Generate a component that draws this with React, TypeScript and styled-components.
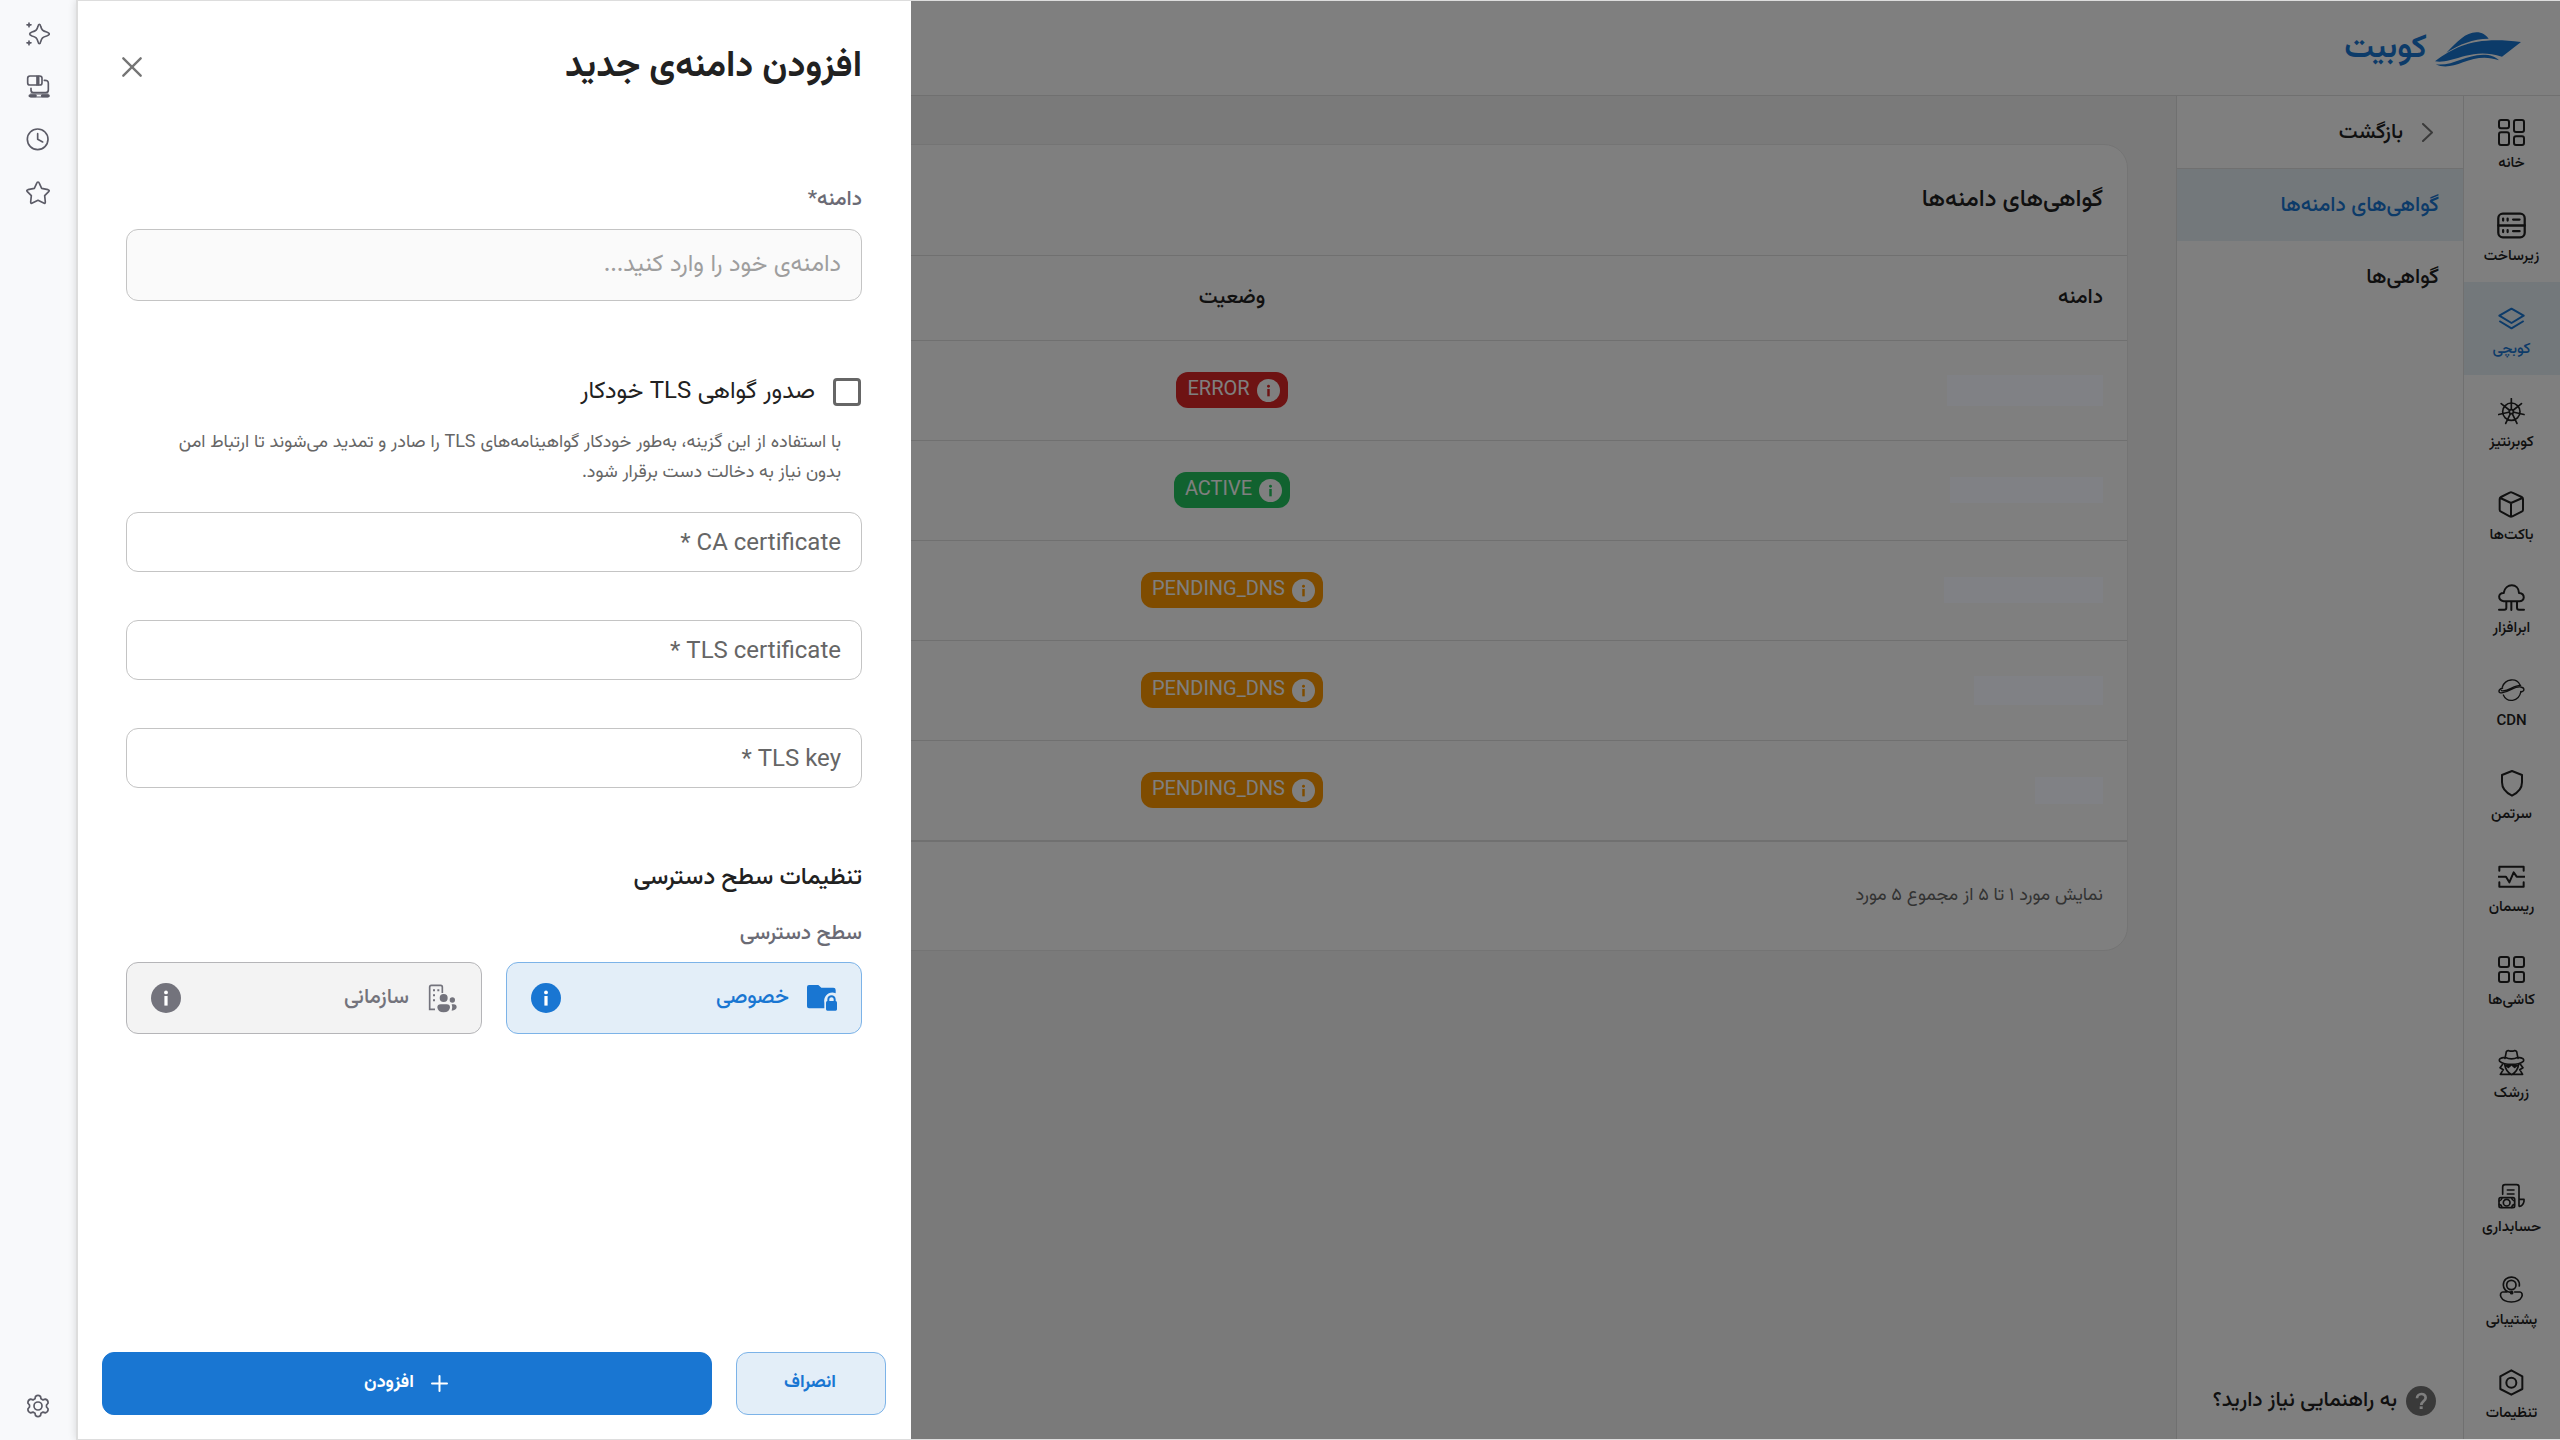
import React from "react";
import styled, { createGlobalStyle } from "styled-components";

const blue = "#1976d2";
const ink = "#212121";
const muted = "#666666";
const line = "#e0e0e0";
const paleBlue = "#e3eef8";
const activeFill = "#e7f0f7";
const font = `Vazirmatn, Roboto, "DejaVu Sans", sans-serif`;

const GlobalStyle = createGlobalStyle`
  *, *::before, *::after { box-sizing: border-box; }
  body { margin: 0; font-family: ${font}; color: ${ink}; background: #fff; }
  button, input { font-family: inherit; }
  button { cursor: pointer; }
  h1, h2, h3, p { margin: 0; }
  a { color: inherit; text-decoration: none; }
`;

/* ---------- shell ---------- */

const Shell = styled.div`
  display: grid;
  grid-template-columns: 76px minmax(0, 1fr);
  height: 100vh;
  background: #f8f9fb;
`;

const Rail = styled.aside`
  display: flex;
  flex-direction: column;
  align-items: center;
  gap: 29px;
  padding: 22px 0;
`;

const RailButton = styled.button<{ $last?: boolean }>`
  display: flex;
  padding: 0;
  border: 0;
  background: none;
  color: #5b5b66;
  margin-top: ${(p) => (p.$last ? "auto" : "0")};
`;

const Frame = styled.div`
  position: relative;
  display: flex;
  flex-direction: column;
  min-width: 0;
  overflow: hidden;
  direction: rtl;
  background: #fff;
  border: 1px solid #dddddd;
  border-left-width: 2px;
  border-right-width: 0;
  box-shadow: 0 0 8px rgba(0, 0, 0, 0.14);
`;

const Header = styled.header`
  display: flex;
  align-items: center;
  height: 95px;
  flex: none;
  padding: 2px 39px 0;
  border-bottom: 1px solid ${line};
`;

const Brand = styled.a`
  display: flex;
  align-items: center;
  gap: 8px;
  color: ${blue};
  font-size: 33px;
  line-height: 48px;
  font-weight: 600;
`;

const Body = styled.div`
  display: flex;
  flex: 1;
  min-height: 0;
`;

/* ---------- navigation ---------- */

const Nav = styled.nav`
  display: flex;
  flex-direction: column;
  flex: none;
  width: 97px;
  border-left: 1px solid ${line};
`;

const NavItem = styled.a<{ $active?: boolean; $push?: boolean }>`
  display: flex;
  flex-direction: column;
  align-items: center;
  height: 93px;
  padding: 23px 1px 0 0;
  gap: 6px;
  font-size: 15px;
  line-height: 24px;
  font-weight: 500;
  color: ${(p) => (p.$active ? blue : ink)};
  background: ${(p) => (p.$active ? activeFill : "transparent")};
  margin-top: ${(p) => (p.$push ? "auto" : "0")};
`;

const SubNav = styled.nav`
  display: flex;
  flex-direction: column;
  flex: none;
  width: 287px;
  border-left: 1px solid ${line};
`;

const BackLink = styled.a`
  display: flex;
  align-items: center;
  gap: 19px;
  height: 73px;
  padding: 1px 30px 0;
  border-bottom: 1px solid ${line};
  font-size: 21px;
  line-height: 32px;
  font-weight: 500;
`;

const SubItem = styled.a<{ $active?: boolean }>`
  display: flex;
  align-items: center;
  height: 72px;
  padding: 1px 24px 0;
  font-size: 21px;
  line-height: 32px;
  font-weight: 500;
  color: ${(p) => (p.$active ? blue : ink)};
  background: ${(p) => (p.$active ? activeFill : "transparent")};
`;

const HelpLink = styled.a`
  display: flex;
  align-items: center;
  gap: 9px;
  margin-top: auto;
  padding: 0 27px 22px;
  font-size: 21px;
  line-height: 32px;
  font-weight: 500;
`;

/* ---------- certificates table ---------- */

const Main = styled.main`
  flex: 1;
  min-width: 0;
  padding: 48px;
  background: #f5f5f5;
`;

const Card = styled.section`
  background: #fff;
  border: 1px solid #e8e8e8;
  border-radius: 24px;
`;

const CardTitle = styled.h1`
  padding: 35px 24px;
  border-bottom: 1px solid ${line};
  font-size: 24px;
  line-height: 40px;
  font-weight: 500;
`;

const Table = styled.table`
  width: 100%;
  table-layout: fixed;
  border-collapse: separate;
  border-spacing: 0;
  border-bottom: 1px solid ${line};
`;

const Cell = styled.td<{ $center?: boolean }>`
  height: 100px;
  padding: 0 24px 1px;
  border-bottom: 1px solid ${line};
  font-size: 0;
  line-height: 0;
  text-align: ${(p) => (p.$center ? "center" : "start")};
`;

const HeadCell = styled(Cell)`
  height: 85px;
  font-size: 21px;
  line-height: 32px;
  font-weight: 500;
`;

const HiddenDomain = styled.div<{ $w: number; $h: number }>`
  position: relative;
  z-index: 3;
  width: ${(p) => p.$w}px;
  height: ${(p) => p.$h}px;
  background: #808185;
`;

const Badge = styled.span<{ $tone: string }>`
  display: inline-flex;
  align-items: center;
  gap: 7px;
  height: 36px;
  padding: 0 8px 0 11px;
  border-radius: 12px;
  vertical-align: middle;
  background: ${(p) => p.$tone};
  color: #fff;
  font-family: Roboto, sans-serif;
  font-size: 20px;
  line-height: 24px;
`;

const BadgeText = styled.span`
  padding-bottom: 4px;
`;

const CardFooter = styled.p`
  padding: 36px 24px;
  font-size: 18px;
  line-height: 36px;
  color: ${muted};
`;

/* ---------- drawer ---------- */

const Backdrop = styled.div`
  position: absolute;
  inset: 0;
  z-index: 2;
  background: rgba(0, 0, 0, 0.5);
`;

const Drawer = styled.form`
  position: absolute;
  inset: 0 auto 0 0;
  z-index: 4;
  display: flex;
  flex-direction: column;
  width: 833px;
  background: #fff;
  border-right: 1px solid #ffffff;
`;

const DrawerHead = styled.div`
  display: flex;
  align-items: center;
  justify-content: space-between;
  height: 132px;
  flex: none;
  padding: 0 48px 0 44px;
`;

const DrawerTitle = styled.h2`
  font-size: 36px;
  line-height: 56px;
  font-weight: 700;
`;

const CloseButton = styled.button`
  display: flex;
  padding: 0;
  border: 0;
  background: none;
  color: #757575;
`;

const Fields = styled.div`
  display: flex;
  flex-direction: column;
  flex: 1;
  padding: 51px 48px 0;
`;

const FieldLabel = styled.label`
  font-size: 21px;
  line-height: 32px;
  font-weight: 500;
  color: #6b6b75;
`;

const TextField = styled.input<{ $tall?: boolean }>`
  width: 100%;
  height: ${(p) => (p.$tall ? "72px" : "60px")};
  padding: 0 20px;
  border: 1px solid #c4c4c4;
  border-radius: 12px;
  background: ${(p) => (p.$tall ? "#fafafa" : "#fff")};
  color: ${ink};
  font-family: ${(p) => (p.$tall ? font : `Roboto, ${font}`)};
  font-size: 24px;
  line-height: 32px;
  &::placeholder {
    color: ${(p) => (p.$tall ? "#9e9e9e" : muted)};
    opacity: 1;
  }
`;

const DomainGroup = styled.div`
  display: flex;
  flex-direction: column;
  gap: 13px;
`;

const CheckRow = styled.label`
  display: flex;
  align-items: center;
  gap: 18px;
  margin-top: 71px;
  padding: 0 1px;
  font-size: 24px;
  line-height: 40px;
`;

const Checkbox = styled.input`
  appearance: none;
  width: 28px;
  height: 28px;
  margin: 0;
  border: 3px solid ${muted};
  border-radius: 4px;
  background: #fff;
`;

const Hint = styled.p`
  margin: 16px 21px 0;
  font-size: 18px;
  line-height: 30px;
  color: ${muted};
`;

const CertStack = styled.div`
  display: flex;
  flex-direction: column;
  gap: 48px;
  margin-top: 24px;
`;

const Access = styled.fieldset`
  margin: 70px 0 0;
  padding: 0;
  border: 0;
`;

const AccessTitle = styled.h3`
  font-size: 24px;
  line-height: 40px;
  font-weight: 500;
`;

const AccessLabel = styled.p`
  margin: 20px 0 12px;
  font-size: 21px;
  line-height: 32px;
  font-weight: 500;
  color: #6b6b75;
`;

const Options = styled.div`
  display: grid;
  grid-template-columns: 1fr 1fr;
  gap: 24px;
`;

const Option = styled.button<{ $on?: boolean }>`
  display: flex;
  align-items: center;
  gap: 18px;
  height: 72px;
  padding: 0 24px;
  border: 1px solid ${(p) => (p.$on ? "#7cb3e8" : "#b5b5b8")};
  border-radius: 12px;
  background: ${(p) => (p.$on ? paleBlue : "#f3f3f3")};
  color: ${(p) => (p.$on ? blue : "#73737c")};
  font-size: 21px;
  line-height: 32px;
  font-weight: 500;
`;

const OptionText = styled.span`
  flex: 1;
  text-align: start;
`;

const Actions = styled.div`
  display: flex;
  gap: 24px;
  flex: none;
  padding: 24px;
`;

const ActionButton = styled.button<{ $primary?: boolean }>`
  display: flex;
  align-items: center;
  justify-content: center;
  gap: 17px;
  flex: ${(p) => (p.$primary ? "1" : "none")};
  width: ${(p) => (p.$primary ? "auto" : "150px")};
  height: 63px;
  padding: 0 8px 1px 6px;
  border: 1px solid ${(p) => (p.$primary ? blue : "#7cb3e8")};
  border-radius: 12px;
  background: ${(p) => (p.$primary ? blue : paleBlue)};
  color: ${(p) => (p.$primary ? "#fff" : blue)};
  font-size: 18px;
  line-height: 32px;
  font-weight: 700;
`;

/* ---------- drawings ---------- */

type IconProps = { w?: number; h?: number; box?: string; sw?: number; children: React.ReactNode };

const Icon = ({ w = 27, h = 27, box = "0 0 81 81", sw = 6, children }: IconProps) => (
  <svg width={w} height={h} viewBox={box} fill="none" stroke="currentColor" strokeWidth={sw}
    strokeLinecap="round" strokeLinejoin="round" aria-hidden="true">
    {children}
  </svg>
);

const InfoDot = ({ size, glyph = "#fff" }: { size: number; glyph?: string }) => (
  <Icon w={size} h={size} box="0 0 30 30" sw={0}>
    <circle cx="15" cy="15" r="15" fill="currentColor" />
    <rect x="13.4" y="13" width="3.2" height="9.6" fill={glyph} />
    <circle cx="15" cy="9.4" r="1.9" fill={glyph} />
  </Icon>
);

const Boat = () => (
  <svg width="86" height="35" viewBox="0 0 258 105" fill="currentColor" aria-hidden="true">
    <path d="M34 62C66 30 92 1 124 1c18 0 28 8 37 19C112 21 76 36 34 62z" />
    <path d="M0 88C62 40 128 12 258 30l-57 44C134 52 92 72 46 84 28 89 14 90 0 88z" />
    <path d="M2 97c50 6 88-28 142-29 22 0 38 6 48 17-38-14-72-8-108 6-30 12-58 18-82 6z" />
  </svg>
);

const HomeIcon = () => (
  <Icon>
    <rect x="3" y="3" width="30" height="25" rx="6" />
    <rect x="3" y="40" width="30" height="38" rx="6" />
    <rect x="48" y="3" width="30" height="36" rx="6" />
    <rect x="48" y="52" width="30" height="26" rx="6" />
  </Icon>
);

const ServerIcon = () => (
  <Icon w={29} h={27} box="0 0 90 81" sw={7}>
    <rect x="4" y="4" width="82" height="73" rx="14" />
    <path d="M4 40.500h82" />
    <path d="M19 19v6M33 19v6M50 22h20M19 55v6M33 55v6M50 58h20" />
  </Icon>
);

const LayersIcon = () => (
  <Icon>
    <path d="M40.500 11 77 32 40.500 54 4 32zM4 48l36.500 22L77 48" strokeLinecap="butt" />
  </Icon>
);

const HelmIcon = () => (
  <Icon sw={5}>
    <circle cx="40" cy="41" r="26" />
    <circle cx="40" cy="41" r="6" />
    {[0, 1, 2, 3, 4, 5, 6].map((i) => (
      <path key={i} d="M40 33V2" transform={`rotate(${(i * 360) / 7} 40 41)`} />
    ))}
  </Icon>
);

const CubeIcon = () => (
  <Icon>
    <path d="M35 5q4-2 8 0l28 13q4 2 4 6v32q0 4-4 6L43 76q-4 2-8 0L9 62q-4-2-4-6V24q0-4 4-6zM7 21l32 15 34-15M39 36v40" />
  </Icon>
);

const CloudLegsIcon = () => (
  <Icon>
    <path d="M17 52C-2 48 0 26 17 27 22-4 62-4 63 27c20 2 18 26 0 25zM25 54v17q0 6-6 6H3M40 54v24M57 54v17q0 6 6 6h15" />
  </Icon>
);

const PlanetIcon = () => (
  <Icon sw={4}>
    <path d="M13 30C22 4 56 2 66 24M16 54c11 24 46 22 53-11" />
    <path d="M14 33C-1 38-1 50 14 47c24-4 34-19 54-17 13 2 13 13 0 15M10 41c22 4 36-17 58-16" />
  </Icon>
);

const ShieldIcon = () => (
  <Icon>
    <path d="M42 3 72 15v22c0 19-11 31-30 40C23 68 12 56 12 37V15z" />
  </Icon>
);

const PulseIcon = () => (
  <Icon>
    <path d="M4 23V11h73v12M4 58v13h73V58M2 41h22l10 17 13-30 9 13h23" />
  </Icon>
);

const TilesIcon = () => (
  <Icon>
    {[3, 48].map((x) => [3, 48].map((y) => <rect key={`${x}-${y}`} x={x} y={y} width="30" height="30" rx="6" />))}
  </Icon>
);

const SpyIcon = () => (
  <Icon sw={5}>
    <path d="M21 28 25 8q2-4 7-3 9 3 17 0 5-1 7 3l4 20M21 25C6 26 2 31 5 37c16 12 55 12 71 0 3-6-1-11-16-12-12 6-27 6-39 0z" />
    <path d="M20 46c2 14 10 25 21 31 11-6 19-17 21-31M14 46 6 56l10 6-9 14h67l-9-14 10-6-8-10M24 49h14l-7 6zM43 49h14l-7 6z" />
  </Icon>
);

const BillingIcon = () => (
  <Icon sw={5}>
    <path d="M14 34V12q0-7 7-7h35q7 0 7 7v56M28 21h20M28 33h20M63 49h15v6q-3 14-14 15" />
    <rect x="3" y="44" width="47" height="30" rx="5" />
    <circle cx="26" cy="59" r="10" />
    <path d="M4 54q7-2 8-9M49 54q-7-2-8-9M4 64q7 2 8 9M49 64q-7 2-8 9" />
  </Icon>
);

const SupportIcon = () => (
  <Icon sw={5}>
    <circle cx="40" cy="27" r="14" />
    <path d="M64 30C68-4 16-6 16 27c0 10 8 20 24 23M27 48H14C2 49 4 77 40 78c36-1 38-29 26-30H50" />
    <circle cx="41" cy="50" r="3" fill="currentColor" />
  </Icon>
);

const HexIcon = () => (
  <Icon>
    <path d="M40 4 73 22v38L40 77 7 60V22z" />
    <circle cx="40" cy="41" r="15" />
  </Icon>
);

const QuestionDot = () => (
  <Icon w={30} h={30} box="0 0 90 90" sw={0}>
    <circle cx="45" cy="45" r="45" fill="#757575" />
    <path d="M33 37c0-17 26-17 26-2 0 11-13 11-13 22" stroke="#fff" strokeWidth="8" strokeLinecap="butt" />
    <rect x="41" y="61" width="9" height="8" fill="#fff" />
  </Icon>
);

const FolderLock = () => (
  <svg width="30" height="30" viewBox="0 0 90 90" fill="currentColor" aria-hidden="true">
    <path d="M6 6h28l9 8h36q7 0 7 7v10C68 23 48 38 52 60v16H6q-6 0-6-6V12q0-6 6-6z" />
    <path d="M57 59q0-5 4-5v-5c0-16 25-16 25 0v5q4 0 4 5v20q0 4-4 4H61q-4 0-4-4zM67 54h13v-5c0-8-13-8-13 0z" fillRule="evenodd" />
  </svg>
);

const OrgIcon = () => (
  <svg width="30" height="30" viewBox="0 0 90 90" fill="currentColor" aria-hidden="true">
    <path d="M24 79H8V12q0-5 5-5h28q5 0 5 5v18" fill="none" stroke="currentColor" strokeWidth="5" />
    <path d="M18 19h6v6h-6zM31 19h6v6h-6zM18 34h6v6h-6zM18 49h6v6h-6z" />
    <circle cx="50" cy="45" r="12" />
    <circle cx="76" cy="51" r="8" />
    <path d="M31 73q0-9 10-9h18q10 0 10 9-1 15-19 15T31 73zM74 64h6q9 0 9 9-1 9-15 10 4-10 0-19z" />
  </svg>
);

const navItems = [
  { text: "خانه", icon: <HomeIcon /> },
  { text: "زیرساخت", icon: <ServerIcon /> },
  { text: "کوبچی", icon: <LayersIcon />, active: true },
  { text: "کوبرنتیز", icon: <HelmIcon /> },
  { text: "باکت‌ها", icon: <CubeIcon /> },
  { text: "ابرافزار", icon: <CloudLegsIcon /> },
  { text: "CDN", icon: <PlanetIcon /> },
  { text: "سرتمن", icon: <ShieldIcon /> },
  { text: "ریسمان", icon: <PulseIcon /> },
  { text: "کاشی‌ها", icon: <TilesIcon /> },
  { text: "زرشک", icon: <SpyIcon /> },
  { text: "حسابداری", icon: <BillingIcon />, push: true },
  { text: "پشتیبانی", icon: <SupportIcon /> },
  { text: "تنظیمات", icon: <HexIcon /> },
];

const tones: Record<string, string> = { ERROR: "#dc2626", ACTIVE: "#22c55e", PENDING_DNS: "#ff9800" };

const rows = [
  { status: "ERROR", w: 156, h: 31 },
  { status: "ACTIVE", w: 153, h: 26 },
  { status: "PENDING_DNS", w: 159, h: 26 },
  { status: "PENDING_DNS", w: 129, h: 29 },
  { status: "PENDING_DNS", w: 68, h: 27 },
];

export default function App() {
  return (
    <Shell>
      <GlobalStyle />
      <Rail>
        <RailButton aria-label="Assistant">
          <Icon w={24} h={24} box="0 0 72 72" sw={5}>
            <path d="M40 7q3 0 4 6c3 11 6 14 18 17q8 3 8 6t-8 6c-12 3-15 6-18 17q-1 6-4 6t-4-6c-3-11-6-14-18-17q-7-3-7-6t7-6c12-3 15-6 18-17q1-6 4-6z" />
            <path d="M9 3v11M3 8.500h12M9 57v11M3 62.500h12" />
          </Icon>
        </RailButton>
        <RailButton aria-label="Players">
          <Icon w={24} h={24} box="0 0 72 72" sw={5}>
            <rect x="5" y="3" width="43" height="27" rx="7" />
            <path d="M33 4v25M38 4v25M55 16q12-1 12 9v20q0 8-8 8H22q-7 0-7-8v-5" />
            <path d="M12 62h16M49 62h18" strokeWidth="9" />
            <path d="M14 57h52M14 66h52" strokeWidth="3" />
          </Icon>
        </RailButton>
        <RailButton aria-label="History">
          <Icon w={24} h={24} box="0 0 72 72" sw={5}>
            <circle cx="35" cy="34" r="31" />
            <path d="M35 17v17l15 8" />
          </Icon>
        </RailButton>
        <RailButton aria-label="Bookmarks">
          <Icon w={24} h={24} box="0 0 72 72" sw={5}>
            <path d="M36 3q3 0 4 4l7 15 19 4q6 2 2 6L56 44l2 19q0 6-5 3L36 58l-17 8q-5 3-5-3l2-19L4 32q-4-4 2-6l19-4 7-15q1-4 4-4z" />
          </Icon>
        </RailButton>
        <RailButton $last aria-label="Settings">
          <Icon w={24} h={24} box="0 0 24 24" sw={1.700}>
            <path d="M9.500 2.500Q12 .2 14.500 2.500l.5 2.300 2 1.100 2.300-.8q3.200.9 2.700 4.200L20.500 11v2l1.500 1.700q.5 3.300-2.700 4.200l-2.300-.8-2 1.100-.5 2.300Q12 23.800 9.500 21.500L9 19.200l-2-1.100-2.300.8Q1.500 18 2 14.700L3.500 13v-2L2 9.300Q1.500 6 4.700 5.100l2.300.8 2-1.100z" />
            <circle cx="12" cy="12" r="4" />
          </Icon>
        </RailButton>
      </Rail>

      <Frame>
        <Header>
          <Brand href="#">
            <Boat />
            کوبیت
          </Brand>
        </Header>
        <Body>
          <Nav>
            {navItems.map((n) => (
              <NavItem key={n.text} href="#" $active={n.active} $push={n.push}>
                {n.icon}
                {n.text}
              </NavItem>
            ))}
          </Nav>
          <SubNav>
            <BackLink href="#">
              <Icon w={11} h={19} box="0 0 33 57">
                <path d="M3 3l27 25.500L3 54" stroke="#757575" />
              </Icon>
              بازگشت
            </BackLink>
            <SubItem href="#" $active>گواهی‌های دامنه‌ها</SubItem>
            <SubItem href="#">گواهی‌ها</SubItem>
            <HelpLink href="#">
              <QuestionDot />
              به راهنمایی نیاز دارید؟
            </HelpLink>
          </SubNav>
          <Main>
            <Card>
              <CardTitle>گواهی‌های دامنه‌ها</CardTitle>
              <Table>
                <colgroup>
                  <col width="30%" />
                  <col width="29.5%" />
                  <col />
                </colgroup>
                <thead>
                  <tr>
                    <HeadCell as="th" scope="col">دامنه</HeadCell>
                    <HeadCell as="th" scope="col" $center>وضعیت</HeadCell>
                    <HeadCell />
                  </tr>
                </thead>
                <tbody>
                  {rows.map((r, i) => (
                    <tr key={i}>
                      <Cell><HiddenDomain $w={r.w} $h={r.h} /></Cell>
                      <Cell $center>
                        <Badge $tone={tones[r.status]}>
                          <InfoDot size={23} glyph={tones[r.status]} />
                          <BadgeText>{r.status}</BadgeText>
                        </Badge>
                      </Cell>
                      <Cell />
                    </tr>
                  ))}
                </tbody>
              </Table>
              <CardFooter>نمایش مورد ۱ تا ۵ از مجموع ۵ مورد</CardFooter>
            </Card>
          </Main>
        </Body>

        <Backdrop />

        <Drawer onSubmit={(e) => e.preventDefault()}>
          <DrawerHead>
            <DrawerTitle>افزودن دامنه‌ی جدید</DrawerTitle>
            <CloseButton type="button" aria-label="بستن">
              <Icon w={20} h={20} box="0 0 60 60" sw={7}>
                <path d="M4 4l52 52M56 4 4 56" />
              </Icon>
            </CloseButton>
          </DrawerHead>
          <Fields>
            <DomainGroup>
              <FieldLabel htmlFor="domain">دامنه*</FieldLabel>
              <TextField id="domain" $tall placeholder="دامنه‌ی خود را وارد کنید..." />
            </DomainGroup>
            <CheckRow>
              <Checkbox type="checkbox" />
              صدور گواهی TLS خودکار
            </CheckRow>
            <Hint>
              با استفاده از این گزینه، به‌طور خودکار گواهینامه‌های TLS را صادر و تمدید می‌شوند تا ارتباط امن بدون نیاز به دخالت دست برقرار شود.
            </Hint>
            <CertStack>
              {["CA certificate", "TLS certificate", "TLS key"].map((t) => (
                <TextField key={t} aria-label={t} placeholder={`${t} *`} />
              ))}
            </CertStack>
            <Access>
              <AccessTitle>تنظیمات سطح دسترسی</AccessTitle>
              <AccessLabel>سطح دسترسی</AccessLabel>
              <Options>
                <Option type="button" $on aria-pressed="true">
                  <FolderLock />
                  <OptionText>خصوصی</OptionText>
                  <InfoDot size={30} />
                </Option>
                <Option type="button" aria-pressed="false">
                  <OrgIcon />
                  <OptionText>سازمانی</OptionText>
                  <InfoDot size={30} />
                </Option>
              </Options>
            </Access>
          </Fields>
          <Actions>
            <ActionButton type="button">انصراف</ActionButton>
            <ActionButton type="submit" $primary>
              <Icon w={17} h={17} box="0 0 51 51">
                <path d="M25.500 3v45M3 25.500h45" />
              </Icon>
              افزودن
            </ActionButton>
          </Actions>
        </Drawer>
      </Frame>
    </Shell>
  );
}
